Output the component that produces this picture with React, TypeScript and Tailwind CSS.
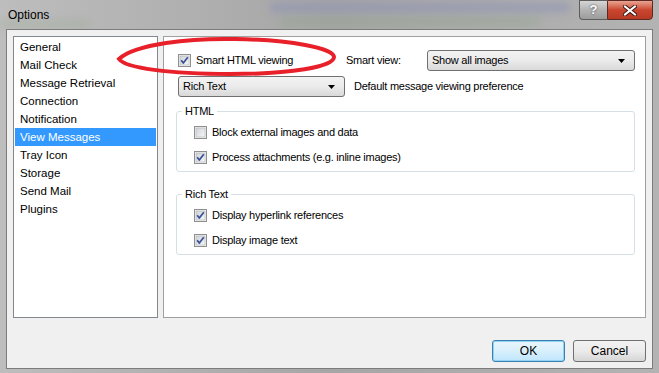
import React from "react";

const font = { fontFamily: '"Liberation Sans", Arial, sans-serif' };

const Check = ({ checked }: { checked?: boolean }) => (
  <svg width="13" height="13" viewBox="0 0 13 13" className="shrink-0">
    <defs>
      <linearGradient id="cbg" x1="0" y1="0" x2="1" y2="1">
        <stop offset="0" stopColor="#cfd2d6" />
        <stop offset="1" stopColor="#f7f7f7" />
      </linearGradient>
    </defs>
    <rect x="0.5" y="0.5" width="12" height="12" fill="#f4f4f4" stroke="#8e8f8f" />
    <rect x="2" y="2" width="9" height="9" fill="url(#cbg)" stroke="#aeb2b6" strokeWidth="0.6" />
    {checked && (
      <path d="M3.2 6.3 L5.3 9 L9.8 3.2" fill="none" stroke="#3b5399" strokeWidth="1.8" strokeLinejoin="round" />
    )}
  </svg>
);

const CheckRow = ({ label, checked }: { label: string; checked?: boolean }) => (
  <div className="flex items-center gap-[5px] h-[17px]">
    <Check checked={checked} />
    <span>{label}</span>
  </div>
);

const Select = ({ value, width }: { value: string; width: string }) => (
  <div
    className={`${width} h-[21px] flex items-center justify-between pl-[4px] pr-[9px] border border-[#707070] rounded-[3px] bg-gradient-to-b from-[#f3f3f3] via-[#ebebeb] to-[#d9d9d9] text-black`}
  >
    <span>{value}</span>
    <svg width="7" height="4" viewBox="0 0 7 4">
      <path d="M0 0 H7 L3.5 4 Z" fill="#000" />
    </svg>
  </div>
);

const Group = ({ title, children }: { title: string; children: React.ReactNode }) => (
  <fieldset className="border border-[#d5dfe5] rounded-[3px] px-0 pt-[6px] pb-[5px]">
    <legend className="ml-[5px] px-[3px] leading-[13px]">{title}</legend>
    <div className="pl-[17px] flex flex-col gap-[8px]">{children}</div>
  </fieldset>
);

const items = [
  "General",
  "Mail Check",
  "Message Retrieval",
  "Connection",
  "Notification",
  "View Messages",
  "Tray Icon",
  "Storage",
  "Send Mail",
  "Plugins",
];

export default function App() {
  return (
    <div
      style={font}
      className="relative w-[659px] h-[373px] overflow-hidden flex flex-col text-[11px] text-black bg-gradient-to-r from-[#bdbdbd] via-[#a6a6a6] to-[#b3b3b3]"
    >
      {/* title bar */}
      <div className="relative h-[29px] flex items-start shrink-0">
        <div className="absolute left-[270px] top-[3px] w-[300px] h-[9px] bg-[#8b90b6] blur-[4px] opacity-60" />
        <div className="absolute left-[280px] top-[18px] w-[260px] h-[7px] bg-[#8fa58a] blur-[4px] opacity-50" />
        <div className="absolute left-[0px] top-[20px] w-[90px] h-[8px] bg-[#9aaa92] blur-[4px] opacity-40" />
        <span className="relative pl-[8px] pt-[8px] text-[12px] text-black leading-[14px]">Options</span>
        <div className="flex-1" />
        <div className="relative flex mr-[6px]">
          <div className="w-[28px] h-[20px] border border-[#5c5c5c] border-r-0 rounded-bl-[4px] bg-gradient-to-b from-[#d6d6d6] via-[#b3b3b3] to-[#9c9c9c] flex items-center justify-center text-white font-bold text-[13px] [text-shadow:0_0_2px_#333]">
            ?
          </div>
          <div className="w-[46px] h-[20px] border border-[#5c2a22] rounded-br-[4px] bg-gradient-to-b from-[#e8a493] via-[#c9452e] to-[#b83a25] flex items-center justify-center">
            <svg width="14" height="11" viewBox="0 0 14 11">
              <path d="M2 1.5 L12 9.5 M12 1.5 L2 9.5" stroke="#3a1a14" strokeWidth="4" strokeLinecap="square" />
              <path d="M2 1.5 L12 9.5 M12 1.5 L2 9.5" stroke="#fff" strokeWidth="2" strokeLinecap="square" />
            </svg>
          </div>
        </div>
      </div>

      {/* body */}
      <div className="relative ml-[6px] mr-[6px] mb-[5px] flex-1 border border-[#7c7c7c] bg-[#f0f0f0] p-[6px] flex flex-col">
        <div className="flex gap-[5px] h-[282px]">
          <div className="w-[145px] border border-[#828790] bg-white p-[1px] flex flex-col">
            {items.map((it) => (
              <div
                key={it}
                className={`h-[18px] leading-[18px] pl-[5px] text-[11.5px] ${
                  it === "View Messages" ? "bg-[#3399ff] text-white" : ""
                }`}
              >
                {it}
              </div>
            ))}
          </div>
          <div className="flex-1 border border-[#a0a0a0] bg-white pl-[12px] pr-[10px] pt-[13px] flex flex-col tracking-[-0.25px]">
            <div className="flex items-center h-[21px] pl-[2px]">
              <div className="w-[168px] flex items-center gap-[5px]">
                <Check checked />
                <span>Smart HTML viewing</span>
              </div>
              <span className="w-[81px]">Smart view:</span>
              <Select value="Show all images" width="w-[208px]" />
            </div>
            <div className="flex items-center h-[21px] mt-[5px] pl-[2px] gap-[9px]">
              <Select value="Rich Text" width="w-[167px]" />
              <span>Default message viewing preference</span>
            </div>
            <div className="mt-[8px]">
              <Group title="HTML">
                <CheckRow label="Block external images and data" />
                <CheckRow label="Process attachments (e.g. inline images)" checked />
              </Group>
            </div>
            <div className="mt-[16px]">
              <Group title="Rich Text">
                <CheckRow label="Display hyperlink references" checked />
                <CheckRow label="Display image text" checked />
              </Group>
            </div>
          </div>
        </div>
        <div className="flex justify-end gap-[8px] mt-[22px]">
          <button className="w-[73px] h-[22px] border border-[#3c7fb1] rounded-[3px] bg-gradient-to-b from-[#eaf6fd] via-[#d9f0fc] to-[#bee6fd] shadow-[inset_0_0_0_1px_#8fd4f5] text-[12px]">
            OK
          </button>
          <button className="w-[73px] h-[22px] border border-[#707070] rounded-[3px] bg-gradient-to-b from-[#f2f2f2] via-[#ebebeb] to-[#d6d6d6] text-[12px]">
            Cancel
          </button>
        </div>
      </div>

      {/* annotation */}
      <svg className="absolute left-0 top-0 pointer-events-none" width="659" height="373">
        <path
          d="M119 59 C 135 44, 190 38, 235 39 C 290 40, 334 48, 334 57 C 334 67, 290 74, 230 74 C 170 74, 125 68, 119 59 Z"
          fill="none"
          stroke="#e8202a"
          strokeWidth="4"
        />
      </svg>
    </div>
  );
}
